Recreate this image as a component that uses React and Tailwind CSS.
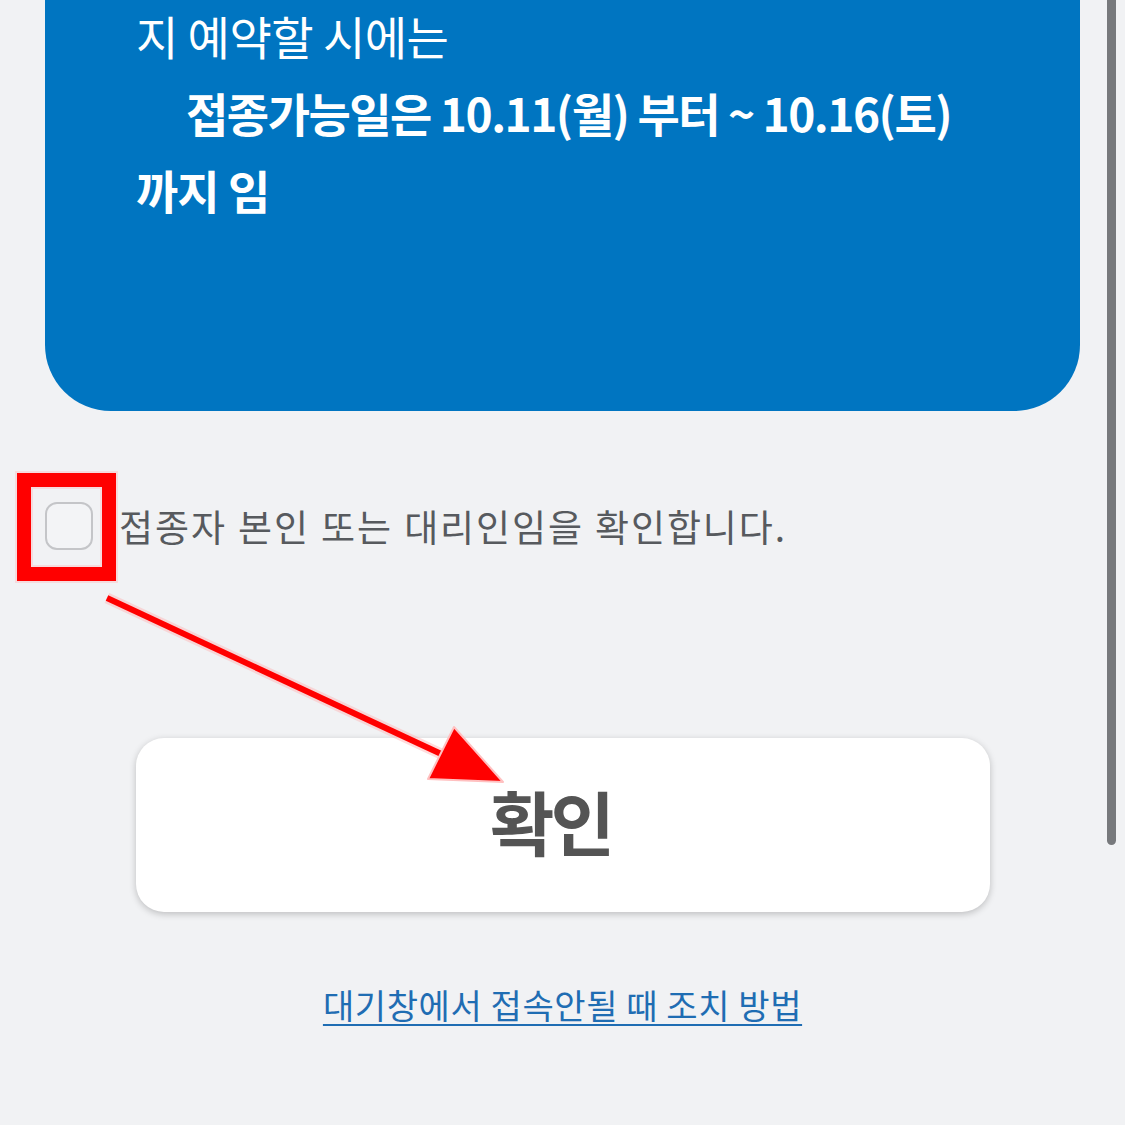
import React from 'react';

const KR = { fontFamily: '"Noto Sans CJK KR", "Noto Sans", sans-serif' };

const Annotation = () => (
  <svg className="absolute left-0 top-0 pointer-events-none" width="1125" height="1125" viewBox="0 0 1125 1125">
    {/* red box around checkbox */}
    <rect x="24" y="480" width="85" height="94" fill="none" stroke="#ffb3b3" strokeWidth="18" opacity="0.35" />
    <rect x="24" y="480" width="85" height="94" fill="none" stroke="#ff0000" strokeWidth="14" />
    {/* arrow */}
    <line x1="107" y1="598" x2="452" y2="759" stroke="#ffb3b3" strokeWidth="11" opacity="0.45" />
    <line x1="107" y1="598" x2="452" y2="759" stroke="#ff0000" strokeWidth="6" />
    <polygon points="454,727 428,779 503,782" fill="#ff0000" stroke="#ffc0c0" strokeWidth="2" strokeLinejoin="round" />
  </svg>
);

export default function App() {
  return (
    <div className="relative w-[1125px] h-[1125px] overflow-hidden bg-[#f1f2f4]" style={KR}>
      <div className="px-[45px]">
        {/* notice card */}
        <div className="h-[414px] bg-[#0075c1] rounded-b-[66px] pl-[91px] pr-[40px] text-white text-[46px]">
          <div className="-mt-[3px] leading-[77px]">
            <p className="font-normal tracking-[-0.5px]">지 예약할 시에는</p>
            <p className="font-bold pl-[50px] tracking-[-1.5px]">접종가능일은 10.11(월) 부터 ~ 10.16(토)</p>
            <p className="font-bold tracking-[-1px]">까지 임</p>
          </div>
        </div>

        {/* agree row */}
        <div className="mt-[91px] flex items-center gap-[26px] h-[48px]">
          <div className="w-[48px] h-[48px] shrink-0 rounded-[12px] border-2 border-[#c4c5c8] bg-[#f3f4f6]" />
          <span className="text-[37px] leading-none text-[#575a5e] tracking-[1.9px] [word-spacing:1px] whitespace-nowrap">
            접종자 본인 또는 대리인임을 확인합니다.
          </span>
        </div>

        {/* confirm button */}
        <div className="mt-[188px] flex justify-center">
          <button className="w-[854px] h-[174px] rounded-[28px] bg-white shadow-[0_2px_7px_rgba(0,0,0,0.22)] flex items-center justify-center pr-[24px] pb-[8px]">
            <span className="text-[70px] font-bold text-[#545454] tracking-[-4px] leading-none">확인</span>
          </button>
        </div>

        {/* help link */}
        <div className="mt-[73px] flex justify-center">
          <a className="text-[34px] leading-[40px] text-[#1f6db3] underline decoration-2 underline-offset-[5px] tracking-[0.6px] whitespace-nowrap">
            대기창에서 접속안될 때 조치 방법
          </a>
        </div>
      </div>

      {/* scrollbar */}
      <div className="absolute right-[9px] top-0 w-[9px] h-[845px] rounded-b-full bg-[#77797c]" />

      <Annotation />
    </div>
  );
}
